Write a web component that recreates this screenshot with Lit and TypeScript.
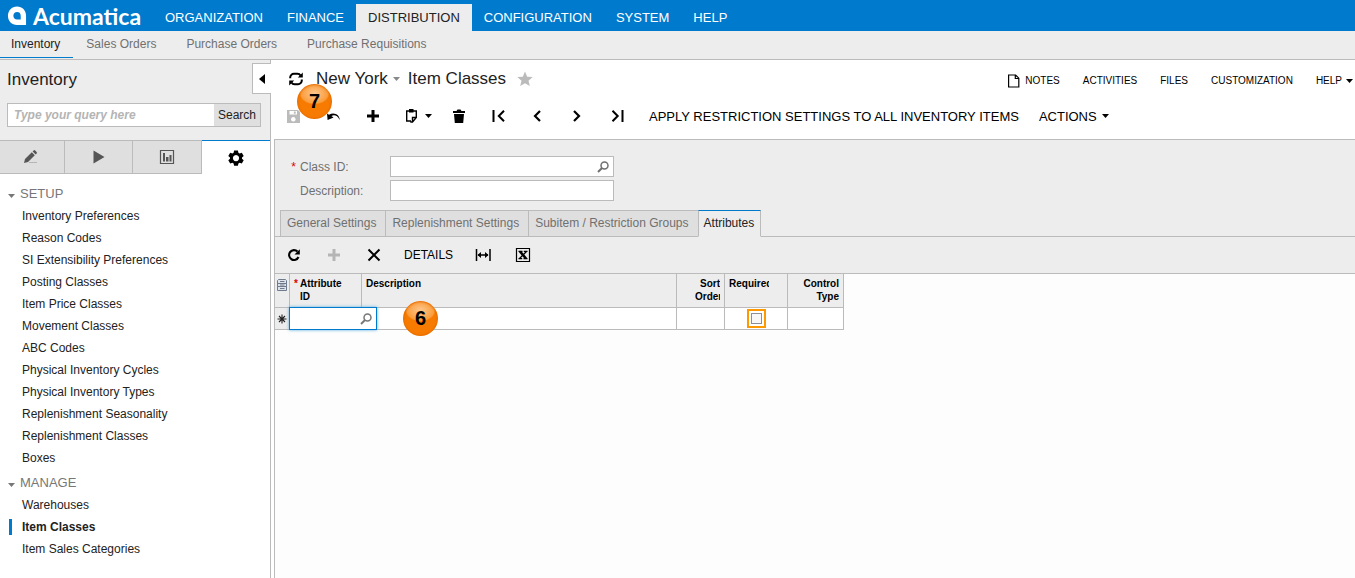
import { LitElement, html, css, svg, nothing } from "lit";
import { customElement, state } from "lit/decorators.js";
import { classMap } from "lit/directives/class-map.js";

const glyphs: Record<string, unknown> = {
  refresh: svg`<path fill="none" stroke="currentColor" stroke-width="2" d="M4.200 9.200V8.500A3.700 3.700 0 0 1 8 4.800h3.500q2 0 3 1.700M15.800 10.500v1A3.700 3.700 0 0 1 12 15.200H8.500q-2 0-3-1.700"/><path fill="currentColor" d="M16.800 3.500v5h-5zM3.200 16.500v-5h5z"/>`,
  save: svg`<path fill="currentColor" fill-rule="evenodd" d="M4 4h11l2 2v11H4zM6.500 5v3.500h7.500V5zm4.400 .6h1.800v2.200h-1.800zM10.300 11a2.300 2.300 0 1 0 .01 0z"/>`,
  undo: svg`<path fill="currentColor" d="M4 7.500l.6 6.500 6-2.600-2.200-1.500c3-1.300 6-.6 8.300 4 0-5-5.500-8.400-10.700-5.200z"/>`,
  plus: svg`<path stroke="currentColor" stroke-width="3" d="M10 4v12M4 10h12"/>`,
  trash: svg`<path fill="currentColor" d="M4 5h3.500l1-1.500h3l1 1.500H16v2H4zM5 8h10l-.8 9H5.800z"/>`,
  first: svg`<path fill="none" stroke="currentColor" stroke-width="2" d="M4.500 4v12M15 4.800l-5.200 5.200 5.200 5.200"/>`,
  prev: svg`<path fill="none" stroke="currentColor" stroke-width="2.200" d="M11 5l-5 5 5 5"/>`,
  next: svg`<path fill="none" stroke="currentColor" stroke-width="2.200" d="M5 5l5 5-5 5"/>`,
  last: svg`<path fill="none" stroke="currentColor" stroke-width="2" d="M3.500 4.800l5.200 5.200-5.200 5.200M13.500 4v12"/>`,
  reload: svg`<path fill="none" stroke="currentColor" stroke-width="2.100" d="M13.500 6.600A4.900 4.900 0 1 0 14.500 12"/><path fill="currentColor" d="M15.800 4.200v5.300h-5.300z"/>`,
  cross: svg`<path stroke="currentColor" stroke-width="2" d="M4.500 4.500l11 11M15.500 4.500l-11 11"/>`,
  fit: svg`<path fill="none" stroke="currentColor" stroke-width="1.500" d="M3.500 4v12M17 4v12M5 10h10"/><path fill="currentColor" d="M4.500 10l3.500-3v6zM15.500 10l-3.500-3v6z"/>`,
  excel: svg`<path fill="none" stroke="currentColor" stroke-width="1.200" d="M3.500 3.500h13v13h-13z"/><path stroke="currentColor" stroke-width="2.600" d="M7 6.500l6 7"/><path stroke="currentColor" stroke-width="1.300" d="M13.500 6.500l-7 7M5.500 6.300h4M10.800 6.300h3.700M5.500 13.700h3.700M10.500 13.700h4"/>`,
  lookup: svg`<circle cx="11.500" cy="8.500" r="3.500" fill="none" stroke="currentColor" stroke-width="1.500"/><path stroke="currentColor" stroke-width="2" d="M9 11l-4 4"/>`,
  pencil: svg`<path fill="currentColor" d="M4 16l1-4 6.800-6.800 3 3L8 15zM12.600 4.400l1-1q.8-.6 1.600.1l1.400 1.400q.7.800.1 1.600l-1 1z"/><path stroke="#b5b5b5" d="M9 15.500h8"/>`,
  play: svg`<path fill="currentColor" d="M4.500 3.500v13L15.500 10z"/>`,
  chart: svg`<path fill="none" stroke="currentColor" stroke-width="1.200" d="M3.500 3.500h13v13h-13z"/><path fill="currentColor" d="M6 6h2v8.500H6zM9 10h2.500v4.500H9zM12.500 8h2v6.500h-2z"/>`,
  gear: svg`<path fill="currentColor" fill-rule="evenodd" d="M8.100 2.500h3.800l.5 2.200 1.200.7 2.200-.7 1.900 3.300-1.700 1.500v1.300l1.700 1.500-1.900 3.200-2.200-.7-1.200.7-.5 2.200H8.100l-.5-2.200-1.200-.7-2.200.7-1.900-3.200L4 10.800V9.500L2.300 8l1.900-3.300 2.200.7 1.200-.7zM10 7a3.100 3.100 0 1 0 .01 0z"/>`,
  star: svg`<path fill="currentColor" d="M10 2.500l2.200 5.200 5.500.4-4.200 3.600 1.300 5.400L10 14.200l-4.800 2.900 1.300-5.400-4.200-3.600 5.500-.4z"/>`,
  page: svg`<path fill="none" stroke="currentColor" stroke-width="1.200" d="M4.600 4h7l3.200 3.200V16H4.600zM11.300 4v3.500h3.500"/>`,
  rows: svg`<path fill="#dfe4ea" stroke="#6d7b8d" d="M6.500 4.500h7l1 1v3h-9v-3zM5.500 8.500h9v3h-9zM5.500 11.500h9v4h-9zM8 6.500h4.500M8 10h4.500M8 13.500h4.500"/>`,
  asterisk: svg`<path stroke="currentColor" stroke-width="1.100" d="M10 5.500v9M5.500 10h9M7 7l6 6M13 7l-6 6"/>`,
};

const icon = (name: string) =>
  html`<svg width="20" height="20" viewBox="0 0 20 20" aria-hidden="true">${glyphs[name]}</svg>`;

const caret = html`<svg width="7" height="4" viewBox="0 0 7 4" aria-hidden="true"><path fill="currentColor" d="M0 0h7L3.500 4z"/></svg>`;

const base = css`
  * { box-sizing: border-box; }
  button {
    font: inherit; color: inherit; background: none; border: 0;
    padding: 0; margin: 0; display: flex; align-items: center; cursor: pointer; white-space: nowrap;
  }
  a { color: inherit; text-decoration: none; white-space: nowrap; }
  svg { display: block; flex: none; }
  input { font: inherit; margin: 0; min-width: 0; border-radius: 0; outline: 0; }
`;

@customElement("top-nav")
class TopNav extends LitElement {
  static styles = [base, css`
    :host { display: block; color: #fff; }
    .bar { background: #007acc; height: 31px; display: flex; align-items: flex-end; }
    .brand { display: flex; align-items: center; gap: 6px; width: 153px; height: 31px; padding-left: 7px; }
    .word { font: 700 23px/30px Lato, sans-serif; }
    .modules { display: flex; font-size: 13px; line-height: 27px; }
    .modules a { padding: 0 12px; }
    .modules .on { background: #ededed; color: #222; }
    .pages { background: #ededed; border-bottom: 1px solid #bbb; height: 29px; display: flex; color: #707070; line-height: 27px; }
    .pages a { padding: 0 17px 0 13px; height: 27px; }
    .pages a:first-child { padding: 0 13px 0 11px; }
    .pages .on { color: #222; border-bottom: 1px solid #007acc; }
  `];
  render() {
    const modules = ["ORGANIZATION", "FINANCE", "DISTRIBUTION", "CONFIGURATION", "SYSTEM", "HELP"];
    const pages = ["Inventory", "Sales Orders", "Purchase Orders", "Purchase Requisitions"];
    return html`
      <header class="bar">
        <a class="brand" href="#">
          <svg width="20" height="20" viewBox="0 0 21 21" aria-hidden="true"><path fill="#fff" fill-rule="evenodd" d="M10.500.5C16 .5 20 4.500 20 10v10h-9.500C5 20 1 16 1 10.300 1 4.800 5 .5 10.500.5zM10.700 6.200c-2.500 0-4 1.700-4 4.100 0 2.300 1.500 4 4 4h3.700v-4c0-2.400-1.300-4.100-3.700-4.100z"/></svg>
          <span class="word">Acumatica</span>
        </a>
        <nav class="modules">
          ${modules.map((m) => html`<a href="#" class=${classMap({ on: m === "DISTRIBUTION" })}>${m}</a>`)}
        </nav>
      </header>
      <nav class="pages">
        ${pages.map((p, i) => html`<a href="#" class=${classMap({ on: i === 0 })}>${p}</a>`)}
      </nav>`;
  }
}

@customElement("side-panel")
class SidePanel extends LitElement {
  static styles = [base, css`
    :host { display: block; position: relative; width: 270px; flex: none; border-right: 1px solid #bbb; background: #fff; }
    .head { background: #ededed; padding: 8px 9px 13px 7px; }
    h1 { margin: 0; font-size: 17px; line-height: 24px; font-weight: 400; color: #222; }
    .search { display: flex; height: 24px; margin-top: 11px; border: 1px solid #bbb; }
    .search input { flex: 1; border: 0; padding: 0 6px; background: #fff; }
    .search input::placeholder { color: #b4b4b4; font-weight: 700; font-style: italic; opacity: 1; }
    .search button { background: #dfdfdf; padding: 0 4px; color: #222; }
    .fold { position: absolute; top: 3px; right: -1px; width: 19px; height: 31px; background: #fff; border: 1px solid #bbb; border-right: 0; justify-content: center; color: #000; }
    .modes { display: grid; grid-template-columns: 65px repeat(3, 1fr); height: 34px; }
    .modes button { justify-content: center; background: #dfdfdf; border: 1px solid #bbb; border-left: 0; color: #555; }
    .modes button:first-child { padding-right: 4px; }
    .modes button.on { background: #fff; border: 0; border-top: 1px solid #007acc; color: #000; }
    .list { padding-top: 8px; }
    h2 { margin: 0; padding-left: 8px; display: flex; align-items: center; gap: 5px; font-size: 13px; line-height: 23px; font-weight: 400; color: #777; }
    h2 svg { margin-top: 4px; }
    ul { margin: 0; padding: 0 0 2px; list-style: none; }
    li { display: flex; align-items: center; height: 22px; padding-left: 9px; color: #222; }
    li a { padding-left: 13px; line-height: 16px; }
    li .on { font-weight: 700; border-left: 3px solid #007acc; padding-left: 10px; }
  `];
  render() {
    const groups: [string, string[]][] = [
      ["SETUP", ["Inventory Preferences", "Reason Codes", "SI Extensibility Preferences", "Posting Classes",
        "Item Price Classes", "Movement Classes", "ABC Codes", "Physical Inventory Cycles",
        "Physical Inventory Types", "Replenishment Seasonality", "Replenishment Classes", "Boxes"]],
      ["MANAGE", ["Warehouses", "Item Classes", "Item Sales Categories"]],
    ];
    const modes = [["pencil", "Entry"], ["play", "Processes"], ["chart", "Reports"], ["gear", "Setup"]];
    return html`
      <div class="head">
        <h1>Inventory</h1>
        <form class="search" role="search">
          <input type="text" aria-label="Search menu" placeholder="Type your query here" />
          <button type="button">Search</button>
        </form>
      </div>
      <button class="fold" aria-label="Collapse">
        <svg width="6" height="10" viewBox="0 0 6 10"><path d="M6 0v10L0 5z"/></svg>
      </button>
      <div class="modes">
        ${modes.map(([g, label]) => html`<button class=${classMap({ on: g === "gear" })} aria-label=${label}>${icon(g)}</button>`)}
      </div>
      <nav class="list">
        ${groups.map(([title, items]) => html`
          <h2>${caret}${title}</h2>
          <ul>${items.map((t) => html`<li><a href="#" class=${classMap({ on: t === "Item Classes" })}>${t}</a></li>`)}</ul>`)}
      </nav>`;
  }
}

@customElement("step-badge")
class StepBadge extends LitElement {
  static styles = css`
    :host {
      display: flex; align-items: center; justify-content: center; width: 35px; height: 35px;
      border-radius: 50%; color: #000; font-weight: 700; font-size: 20px; line-height: 35px;
      background:
        radial-gradient(ellipse 15px 11px at 50% 27%, rgba(255, 225, 190, .75), rgba(255, 190, 120, .5) 90%, transparent),
        #f77b00;
      box-shadow: inset 0 0 2px 1px #e56c00;
    }
  `;
  render() { return html`<slot></slot>`; }
}

@customElement("attribute-grid")
class AttributeGrid extends LitElement {
  static styles = [base, css`
    :host { display: block; }
    table { border-collapse: separate; border-spacing: 0; table-layout: fixed; width: 569px; }
    .c1 { width: 15px; } .c2 { width: 72px; } .c3 { width: 315px; }
    .c4 { width: 48px; } .c5 { width: 63px; } .c6 { width: 56px; }
    th, td { border-right: 1px solid #bbb; border-bottom: 1px solid #bbb; padding: 0; }
    th { background: #ededed; height: 34px; padding: 3px 4px 0; vertical-align: top; text-align: left; font-size: 10px; line-height: 13px; color: #000; }
    .num { text-align: right; }
    .clip { overflow: hidden; width: 40px; }
    .narrow { width: 25px; margin-left: auto; }
    .key { display: flex; gap: 2px; padding-right: 12px; }
    .key i { color: #d00; font-style: normal; }
    .mark { background: #ededed; }
    .mark svg, .corner svg { margin-left: -3px; }
    th.corner { padding: 1px 0 0; }
    td { height: 22px; background: #fff; position: relative; }
    .editor { position: absolute; top: -1px; left: -1px; width: 88px; height: 23px; display: flex; align-items: center; background: #fff; border: 1px solid #007acc; box-shadow: 0 0 3px #59a9dd; z-index: 1; color: #777; }
    .editor input { flex: 1; width: 0; border: 0; background: none; padding: 0 4px; }
    step-badge { position: absolute; left: 41px; top: -7px; z-index: 2; }
    .flag { display: grid; place-items: center; width: 19px; height: 19px; margin: 0 auto; border: 2px solid #f90; }
    .flag input { appearance: none; width: 11px; height: 11px; border: 1px solid #8a9096; background: #f7f7f7; }
  `];
  render() {
    return html`
      <table>
        <colgroup><col class="c1" /><col class="c2" /><col class="c3" /><col class="c4" /><col class="c5" /><col class="c6" /></colgroup>
        <thead>
          <tr>
            <th class="corner" aria-label="Files">${icon("rows")}</th>
            <th><div class="key"><i>*</i><span>Attribute ID</span></div></th>
            <th>Description</th>
            <th class="num"><div class="clip narrow">Sort Order</div></th>
            <th><div class="clip">Required</div></th>
            <th class="num">Control Type</th>
          </tr>
        </thead>
        <tbody>
          <tr>
            <td class="mark">${icon("asterisk")}</td>
            <td><div class="editor"><input type="text" aria-label="Attribute ID" /><button aria-label="Select attribute">${icon("lookup")}</button></div></td>
            <td><step-badge>6</step-badge></td>
            <td></td>
            <td><label class="flag"><input type="checkbox" aria-label="Required" /></label></td>
            <td></td>
          </tr>
        </tbody>
      </table>`;
  }
}

@customElement("item-classes")
class ItemClasses extends LitElement {
  @state() private tab = "Attributes";
  static styles = [base, css`
    :host { display: flex; flex-direction: column; flex: 1; min-width: 0; padding-left: 3px; background: #fff; }
    .top { height: 79px; padding: 7px 2px 0 9px; color: #000; position: relative; }
    .title { display: flex; align-items: center; height: 24px; padding-left: 3px; font-size: 17px; color: #222; }
    .title svg { color: #000; }
    .where { margin: 0 8px 0 10px; gap: 5px; }
    .title .where svg { color: #888; }
    .title .fav { color: #bbb; margin-left: 9px; }
    .title .fav svg { color: inherit; }
    .links { display: flex; gap: 23px; margin-left: auto; font-size: 10px; color: #000; align-self: flex-end; line-height: 20px; }
    .links button { gap: 4px; }
    .links .notes { gap: 1px; }
    .tools { display: flex; align-items: center; gap: 20px; height: 24px; margin-top: 13px; font-size: 13px; }
    .tools .text { gap: 5px; }
    .tools .off { color: #bbb; }
    .copy svg { margin-right: -4px; }
    step-badge { position: absolute; left: 23px; top: 24px; }
    .body { border-left: 1px solid #bbb; border-top: 1px solid #bbb; flex: 1; background: #fdfdfd; }
    .form { background: #ededed; padding: 16px 0 9px; display: grid; gap: 3px; color: #707070; }
    .row { display: grid; grid-template-columns: 25px 90px 224px; align-items: center; }
    .row i { color: #d00; font-style: normal; text-align: right; padding-right: 4px; }
    .field { display: flex; align-items: center; height: 21px; border: 1px solid #bbb; background: #fff; }
    .field input { flex: 1; border: 0; background: none; padding: 0 4px; }
    .tabs { display: flex; align-items: flex-end; background: #ededed; padding-left: 5px; box-shadow: inset 0 -1px #bbb; }
    .tabs button { height: 27px; padding: 0 9px 2px 6px; background: #dfdfdf; border: 1px solid #bbb; border-right: 0; color: #707070; }
    .tabs button.on { background: #ededed; color: #222; border: 1px solid #bbb; border-top-color: #007acc; border-bottom-color: #ededed; padding: 0 6px 2px 5px; }
    .bar { display: flex; align-items: center; gap: 20px; height: 37px; padding-left: 9px; background: #ededed; border-bottom: 1px solid #bbb; color: #000; }
    .bar .off { color: #b5b5b5; }
  `];
  render() {
    const tool = (name: string, label: string, off = false) =>
      html`<button class=${classMap({ off })} aria-label=${label}>${icon(name)}</button>`;
    const tabs = ["General Settings", "Replenishment Settings", "Subitem / Restriction Groups", "Attributes"];
    return html`
      <div class="top">
        <div class="title">
          <button aria-label="Refresh">${icon("refresh")}</button>
          <button class="where">New York ${caret}</button>
          <span>Item Classes</span>
          <button class="fav" aria-label="Add to favorites">${icon("star")}</button>
          <nav class="links">
            <button class="notes">${icon("page")}<span>NOTES</span></button>
            <button>ACTIVITIES</button>
            <button>FILES</button>
            <button>CUSTOMIZATION</button>
            <button>HELP ${caret}</button>
          </nav>
        </div>
        <div class="tools">
          ${tool("save", "Save", true)}${tool("undo", "Cancel")}${tool("plus", "Add")}
          <button class="copy" aria-label="Copy and paste">
            <svg width="30" height="20" viewBox="0 0 30 20"><path fill="none" stroke="currentColor" stroke-width="1.400" d="M6 5H3.700v10H8M10 5h3.300v6.500L9.500 16H8V15.500M9.500 16v-4.500h4"/><path d="M6 3h4.500v3.500H6zM22 8h7l-3.500 4z"/></svg>
          </button>
          ${tool("trash", "Delete")}${tool("first", "First")}${tool("prev", "Previous")}${tool("next", "Next")}${tool("last", "Last")}
          <button class="text">APPLY RESTRICTION SETTINGS TO ALL INVENTORY ITEMS</button>
          <button class="text">ACTIONS ${caret}</button>
        </div>
        <step-badge>7</step-badge>
      </div>
      <div class="body">
        <div class="form">
          <div class="row"><i>*</i><label for="class-id">Class ID:</label>
            <div class="field"><input id="class-id" type="text" /><button aria-label="Select class">${icon("lookup")}</button></div></div>
          <div class="row"><i></i><label for="description">Description:</label>
            <div class="field"><input id="description" type="text" /></div></div>
        </div>
        <div class="tabs" role="tablist">
          ${tabs.map((t) => html`<button role="tab" aria-selected=${t === this.tab} class=${classMap({ on: t === this.tab })} @click=${() => (this.tab = t)}>${t}</button>`)}
        </div>
        ${this.tab === "Attributes" ? html`
          <div class="bar">
            ${tool("reload", "Refresh")}${tool("plus", "Add row", true)}${tool("cross", "Delete row")}
            <button>DETAILS</button>
            ${tool("fit", "Fit to screen")}${tool("excel", "Export to Excel")}
          </div>
          <attribute-grid></attribute-grid>` : nothing}
      </div>`;
  }
}

@customElement("app-root")
class AppRoot extends LitElement {
  static styles = css`
    :host { display: flex; flex-direction: column; min-height: 100vh; font-family: "Liberation Sans", Arial, sans-serif; font-size: 12px; color: #222; background: #fff; }
    main { display: flex; flex: 1; }
  `;
  render() {
    return html`<top-nav></top-nav><main><side-panel></side-panel><item-classes></item-classes></main>`;
  }
}
